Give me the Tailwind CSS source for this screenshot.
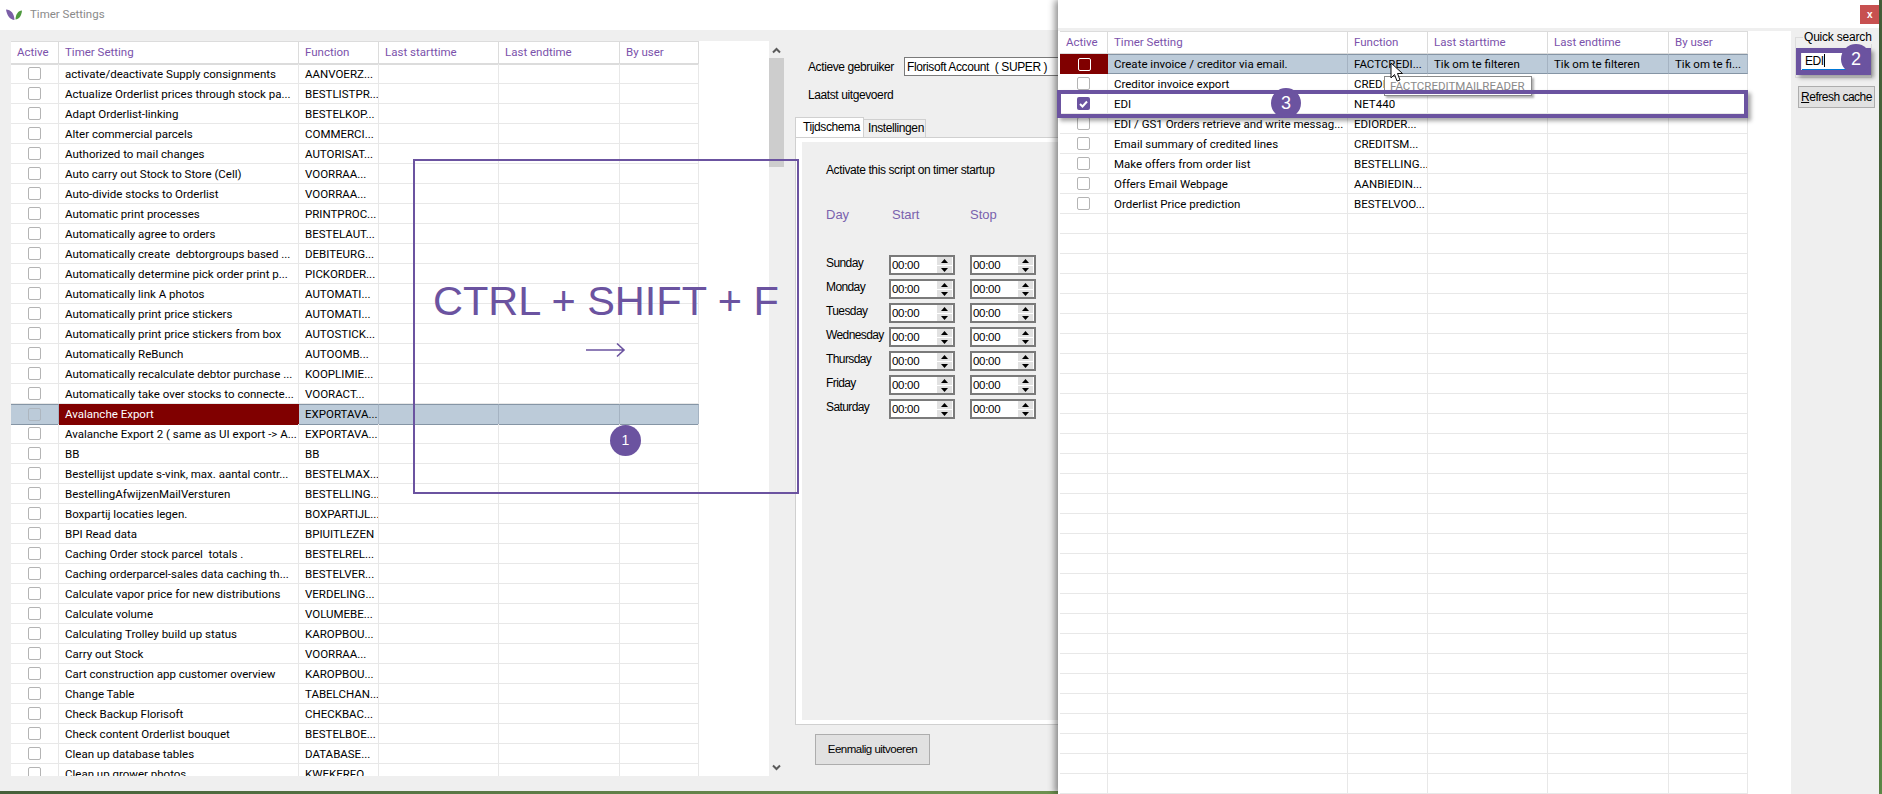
<!DOCTYPE html>
<html lang="en">
<head>
<meta charset="UTF-8">
<title>Timer Settings</title>
<script src="https://cdn.jsdelivr.net/npm/@tailwindcss/browser@4"></script>
</head>
<body class="bg-[#efefef]">
<div class="relative w-[1882px] h-[794px] overflow-hidden bg-[#efefef] font-['Liberation_Sans',sans-serif] text-[12px] tracking-[-0.4px] text-black">

  <!-- main window -->
  <div class="flex items-center h-[30px] bg-white pl-[6px] gap-[8px]">
    <svg width="16" height="12" viewBox="0 0 16 12">
      <path d="M0 0.5C5 1 8 4 8.5 11C4 10.5 1 7 0 0.5Z" fill="#7b5ea7"/>
      <path d="M16 1.5C12 2 9.800 5 9.500 10.500C13 10 15.500 7 16 1.500Z" fill="#4f9a3f"/>
    </svg>
    <span class="font-['Roboto',sans-serif] text-[11.500px] tracking-normal text-[#8a8a8a]">Timer Settings</span>
  </div>

  <div class="flex h-[761px]">
    <div class="w-[11px]"></div>
    <div class="mt-[11px] w-[758px] h-[735px] bg-white overflow-hidden">
      <div id="left-grid" class="w-[688px] border-t border-[#dcdcdc]"></div>
    </div>
    <!-- scrollbar -->
    <div class="w-[15px] h-[746px] flex flex-col items-center">
      <svg class="mt-[17px]" width="9" height="7" viewBox="0 0 9 7"><path d="M1 5.500L4.500 2L8 5.500" fill="none" stroke="#5a5a5a" stroke-width="2"/></svg>
      <div class="mt-[4px] w-[15px] h-[109px] bg-[#cdcdcd]"></div>
      <svg class="mt-[597px]" width="9" height="7" viewBox="0 0 9 7"><path d="M1 1.500L4.500 5L8 1.500" fill="none" stroke="#5a5a5a" stroke-width="2"/></svg>
    </div>

    <!-- settings panel -->
    <div class="w-[274px] pl-[11px]">
      <div class="flex items-center mt-[27px] h-[19px]">
        <span class="pl-[13px] w-[109px] shrink-0">Actieve gebruiker</span>
        <div class="w-[170px] h-[19px] shrink-0 border border-[#7a7a7a] bg-white pl-[2px] flex items-center whitespace-nowrap">Florisoft Account&nbsp; ( SUPER )</div>
      </div>
      <div class="pl-[13px] mt-[12px] h-[14px] leading-[14px]">Laatst uitgevoerd</div>
      <div class="flex items-end mt-[15px] h-[20px]">
        <div class="w-[69px] h-[20px] bg-white border border-b-0 border-[#d0d0d0] pl-[7px] leading-[18px] shrink-0">Tijdschema</div>
        <div class="w-[62px] h-[18px] bg-[#efefef] border border-l-0 border-b-0 border-[#d0d0d0] pl-[4px] leading-[17px] shrink-0">Instellingen</div>
      </div>
      <div class="w-[300px] h-[588px] bg-white border border-[#d0d0d0] p-[6px] pt-[4px] pb-[4px] pr-0">
        <div class="h-[578px] bg-[#efefef] pl-[24px] pt-[21px]">
          <div class="h-[14px] leading-[14px]">Activate this script on timer startup</div>
          <div class="flex mt-[29px] h-[18px] text-[13px] tracking-normal leading-[18px] text-[#7a62ad]">
            <span class="w-[66px]">Day</span><span class="w-[78px]">Start</span><span>Stop</span>
          </div>
          <div id="days" class="mt-[31px] flex flex-col gap-[4px]"></div>
        </div>
      </div>
      <button class="block ml-[20px] mt-[9px] w-[115px] h-[31px] bg-[#e1e1e1] border border-[#adadad] text-[11.500px] tracking-[-0.5px] whitespace-nowrap">Eenmalig uitvoeren</button>
    </div>
  </div>
  <div class="h-[3px] bg-gradient-to-r from-[#46603a] via-[#6f9150] to-[#5d8a47]"></div>

  <div class="absolute right-0 top-0 w-[3px] h-[794px] bg-gradient-to-b from-[#46603a] to-[#5f8c48]"></div>

  <!-- filter window -->
  <div class="absolute left-[1058px] top-0 w-[821px] h-[794px] bg-white shadow-[-3px_0_7px_rgba(0,0,0,0.45)] flex flex-col">
    <div class="flex justify-end h-[28px] bg-white pt-[5px]">
      <div class="w-[19px] h-[19px] bg-[#c75050] text-white font-bold text-[10px] flex items-center justify-center">x</div>
    </div>
    <div class="h-[3px] bg-[#efefef]"></div>
    <div class="flex flex-1">
      <div class="w-[733px] bg-white pl-[2px] overflow-hidden">
        <div id="right-grid" class="w-[688px] border-t border-[#dcdcdc]"></div>
      </div>
      <div class="w-[88px] bg-[#efefef] pl-[4px] pt-[6px]">
        <div class="relative w-[77px] h-[41px] border border-[#dcdcdc]">
          <span class="absolute -top-[7px] left-[7px] bg-[#efefef] px-[1px] leading-[13px] tracking-[-0.2px] whitespace-nowrap">Quick search</span>
          <div class="mt-[15px] ml-[6px] w-[60px] h-[18px] bg-white leading-[17px] pl-[3px] border-b-2 border-[#0078d7]">EDI<span class="inline-block w-[1px] h-[13px] bg-black align-[-2px]"></span></div>
        </div>
        <button class="block mt-[8px] ml-[3px] w-[77px] h-[22px] bg-[#e1e1e1] border border-[#adadad] tracking-[-0.5px] whitespace-nowrap"><span class="underline">R</span>efresh cache</button>
      </div>
    </div>
  </div>

  <!-- annotations -->
  <div class="absolute left-[413px] top-[159px] w-[386px] h-[335px] border-[2px] border-[#6b53a0] flex flex-col items-center tracking-normal">
    <span class="mt-[116px] text-[41.500px] leading-[48px] whitespace-nowrap text-[#6b53a0]">CTRL + SHIFT + F</span>
    <svg class="mt-[17px]" width="40" height="16" viewBox="0 0 40 16"><path d="M0 8H38M31 1.500L38 8L31 14.500" fill="none" stroke="#6b53a0" stroke-width="1.600"/></svg>
  </div>
  <div class="absolute left-[610px] top-[425px] w-[31px] h-[31px] rounded-full bg-[#6b53a0] text-white tracking-normal flex items-center justify-center text-[14px]">1</div>

  <div class="absolute left-[1384px] top-[76px] w-[148px] h-[20px] bg-white border border-[#8a8a8a] shadow-[2px_2px_2px_rgba(0,0,0,0.3)] pl-[5px] font-['Roboto',sans-serif] text-[11.500px] tracking-normal leading-[18px] text-[#8a8a8a] whitespace-nowrap">FACTCREDITMAILREADER</div>
  <svg class="absolute left-[1390px] top-[62px]" width="15" height="21" viewBox="0 0 15 21"><path d="M1 1V16L4.500 12.500L7 19L10 18L7.500 11.500H12.500Z" fill="#fff" stroke="#111" stroke-width="1"/></svg>

  <div class="absolute left-[1057px] top-[90px] w-[691px] h-[28px] border-[4px] border-[#6b53a0] shadow-[3px_3px_4px_rgba(0,0,0,0.35)]"></div>
  <div class="absolute left-[1271px] top-[88px] w-[30px] h-[30px] rounded-full bg-[#6b53a0] text-white tracking-normal flex items-center justify-center text-[18px]">3</div>

  <div class="absolute left-[1796px] top-[48px] w-[75px] h-[27px] border-t-[5px] border-b-[5px] border-l-[5px] border-r-[24px] border-[#6b53a0] shadow-[3px_3px_4px_rgba(0,0,0,0.35)]"></div>
  <div class="absolute left-[1841px] top-[44px] w-[30px] h-[30px] rounded-full bg-[#6b53a0] text-white tracking-normal flex items-center justify-center text-[18px]">2</div>
</div>

<script>
  const leftRows = [
    ["activate/deactivate Supply consignments", "AANVOERZ..."],
    ["Actualize Orderlist prices through stock pa...", "BESTLISTPR..."],
    ["Adapt Orderlist-linking", "BESTELKOP..."],
    ["Alter commercial parcels", "COMMERCI..."],
    ["Authorized to mail changes", "AUTORISAT..."],
    ["Auto carry out Stock to Store (Cell)", "VOORRAA..."],
    ["Auto-divide stocks to Orderlist", "VOORRAA..."],
    ["Automatic print processes", "PRINTPROC..."],
    ["Automatically agree to orders", "BESTELAUT..."],
    ["Automatically create  debtorgroups based ...", "DEBITEURG..."],
    ["Automatically determine pick order print p...", "PICKORDER..."],
    ["Automatically link A photos", "AUTOMATI..."],
    ["Automatically print price stickers", "AUTOMATI..."],
    ["Automatically print price stickers from box", "AUTOSTICK..."],
    ["Automatically ReBunch", "AUTOOMB..."],
    ["Automatically recalculate debtor purchase ...", "KOOPLIMIE..."],
    ["Automatically take over stocks to connecte...", "VOORACT..."],
    ["Avalanche Export", "EXPORTAVA..."],
    ["Avalanche Export 2 ( same as UI export -> A...", "EXPORTAVA..."],
    ["BB", "BB"],
    ["Bestellijst update s-vink, max. aantal contr...", "BESTELMAX..."],
    ["BestellingAfwijzenMailVersturen", "BESTELLING..."],
    ["Boxpartij locaties legen.", "BOXPARTIJL..."],
    ["BPI Read data", "BPIUITLEZEN"],
    ["Caching Order stock parcel  totals .", "BESTELREL..."],
    ["Caching orderparcel-sales data caching th...", "BESTELVER..."],
    ["Calculate vapor price for new distributions", "VERDELING..."],
    ["Calculate volume", "VOLUMEBE..."],
    ["Calculating Trolley build up status", "KAROPBOU..."],
    ["Carry out Stock", "VOORRAA..."],
    ["Cart construction app customer overview", "KAROPBOU..."],
    ["Change Table", "TABELCHAN..."],
    ["Check Backup Florisoft", "CHECKBAC..."],
    ["Check content Orderlist bouquet", "BESTELBOE..."],
    ["Clean up database tables", "DATABASE..."],
    ["Clean up grower photos", "KWEKERFO..."],
  ];
  const rightRows = [
    ["Creditor invoice export", "CREDI"],
    ["EDI", "NET440", true],
    ["EDI / GS1 Orders retrieve and write messag...", "EDIORDER..."],
    ["Email summary of credited lines", "CREDITSM..."],
    ["Make offers from order list", "BESTELLING..."],
    ["Offers Email Webpage", "AANBIEDIN..."],
    ["Orderlist Price prediction", "BESTELVOO..."],
  ];

  const rowCls = "grid grid-cols-[48px_240px_80px_120px_121px_79px] h-[20px] font-['Roboto',sans-serif] text-[11.500px] tracking-normal leading-[21px] whitespace-pre";
  const cell = "border-r border-b border-[#e8e8e8] pl-[6px] overflow-hidden";
  const blue = "bg-[#bccbd9] border-y border-y-[#8595a5] border-r border-r-[#a5b3c2] pl-[6px] overflow-hidden leading-[19px]";

  function box(extra) {
    return `<div class="w-[13px] h-[13px] rounded-[2px] border ${extra}"></div>`;
  }
  const tick = `<div class="w-[13px] h-[13px] rounded-[2px] bg-[#6b53a0] flex items-center justify-center"><svg width="9" height="8" viewBox="0 0 9 8"><path d="M1 4L3.500 6.500L8 1.500" fill="none" stroke="#fff" stroke-width="2"/></svg></div>`;
  const activeCell = inner => `<div class="border-r border-b border-[#e8e8e8] flex items-center justify-center">${inner}</div>`;

  function header() {
    const names = ["Timer Setting", "Function", "Last starttime", "Last endtime", "By user"];
    return `<div class="grid grid-cols-[48px_240px_80px_120px_121px_79px] h-[22px] font-['Roboto',sans-serif] text-[11.500px] tracking-normal leading-[21px] text-[#7b52ab]">
      <div class="border-r border-b-2 border-[#dcdcdc] pl-[6px]">Active</div>` +
      names.map(n => `<div class="border-r border-b-2 border-[#dcdcdc] pl-[6px]">${n}</div>`).join("") + `</div>`;
  }
  function row(name, fn, on) {
    return `<div class="${rowCls}">${activeCell(on ? tick : (name === "" ? "" : box("border-[#b4b4b4] bg-white")))}<div class="${cell}">${name.replace(/>/g, "&gt;")}</div><div class="${cell}">${fn}</div><div class="${cell}"></div><div class="${cell}"></div><div class="${cell}"></div></div>`;
  }

  // left grid
  let html = header();
  leftRows.forEach((r, i) => {
    if (i === 17) {
      html += `<div class="${rowCls}"><div class="${blue} flex items-center justify-center !pl-0">${box("border-[#adb6bf]")}</div><div class="bg-[#800000] text-white pl-[6px] border-y border-[#800000] leading-[19px]">${r[0]}</div><div class="${blue}">${r[1]}</div><div class="${blue}"></div><div class="${blue}"></div><div class="${blue}"></div></div>`;
    } else {
      html += row(r[0], r[1]);
    }
  });
  document.getElementById("left-grid").innerHTML = html;

  // right grid
  const flt = "Tik om te filteren";
  html = header();
  html += `<div class="${rowCls}"><div class="bg-[#800000] flex items-center justify-center">${box("border-white")}</div><div class="${blue}">Create invoice / creditor via email.</div><div class="${blue}">FACTCREDI...</div><div class="${blue}">${flt}</div><div class="${blue}">${flt}</div><div class="${blue}">Tik om te fi...</div></div>`;
  rightRows.forEach(r => { html += row(r[0], r[1], r[2]); });
  for (let i = 0; i < 29; i++) html += row("", "");
  document.getElementById("right-grid").innerHTML = html;

  // day rows
  const spin = `<div class="flex items-center h-[20px] border-2 border-[#7a7a7a] w-[66px] shrink-0 bg-white text-[11.500px] tracking-[-0.3px] leading-[16px] pl-[1px]"><span class="flex-1">00:00</span><div class="w-[15px] h-[16px] flex flex-col gap-[1px] mr-[1px]">
    <div class="h-[8px] bg-[#e1e1e1] flex items-center justify-center"><svg width="7" height="4" viewBox="0 0 7 4"><path d="M3.500 0L7 4H0Z" fill="#000"/></svg></div>
    <div class="h-[7px] bg-[#e1e1e1] flex items-center justify-center"><svg width="7" height="4" viewBox="0 0 7 4"><path d="M0 0H7L3.500 4Z" fill="#000"/></svg></div></div></div>`;
  document.getElementById("days").innerHTML = ["Sunday", "Monday", "Tuesday", "Wednesday", "Thursday", "Friday", "Saturday"]
    .map(d => `<div class="flex items-start h-[20px]"><span class="w-[63px] shrink-0 tracking-[-0.6px] leading-[14px] mt-[1px]">${d}</span>${spin}<span class="w-[15px] shrink-0"></span>${spin}</div>`).join("");
</script>
</body>
</html>
